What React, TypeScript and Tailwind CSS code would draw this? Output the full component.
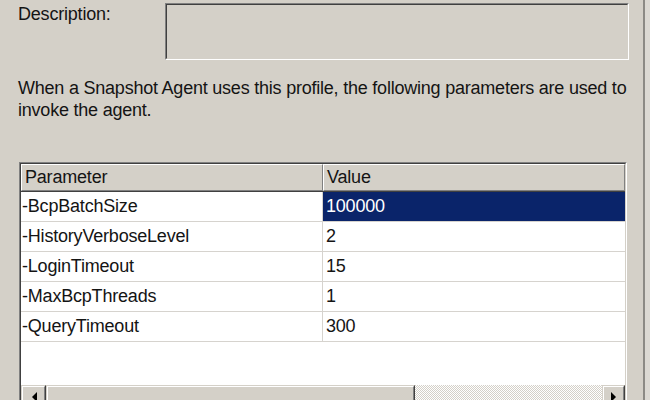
const params: { name: string; value: string }[] = [
  { name: "-BcpBatchSize", value: "100000" },
  { name: "-HistoryVerboseLevel", value: "2" },
  { name: "-LoginTimeout", value: "15" },
  { name: "-MaxBcpThreads", value: "1" },
  { name: "-QueryTimeout", value: "300" },
];

// classic 3D sunken frame: two nested one-pixel borders
function Sunken({ className, children }: { className?: string; children?: React.ReactNode }) {
  return (
    <div
      className={`border border-t-[#808080] border-l-[#808080] border-r-white border-b-white ${className ?? ""}`}
    >
      <div className="h-full border border-t-[#404040] border-l-[#404040] border-r-[#d4d0c8] border-b-[#d4d0c8]">
        {children}
      </div>
    </div>
  );
}

function Raised({ className, children }: { className?: string; children?: React.ReactNode }) {
  return (
    <div
      className={`border border-t-[#d4d0c8] border-l-[#d4d0c8] border-r-[#404040] border-b-[#404040] ${className ?? ""}`}
    >
      <div className="h-full border border-t-white border-l-white border-r-[#808080] border-b-[#808080] bg-[#d4d0c8] flex items-center justify-center">
        {children}
      </div>
    </div>
  );
}

function Arrow({ dir }: { dir: "left" | "right" }) {
  return (
    <svg width="6" height="10" viewBox="0 0 6 10" className="mt-[1px]">
      {dir === "left" ? (
        <polygon points="6,0 6,10 1,5" fill="#000" />
      ) : (
        <polygon points="0,0 0,10 5,5" fill="#000" />
      )}
    </svg>
  );
}

export default function App() {
  return (
    <div
      className="w-[650px] h-[400px] overflow-hidden bg-[#d4d0c8] flex text-[18px] text-[#141414] tracking-[-0.2px]"
      style={{ fontFamily: '"Liberation Sans", Arial, sans-serif' }}
    >
      <div className="w-[643px] shrink-0 flex flex-col">
        <div className="flex pt-[3px]">
          <div className="w-[165px] pl-[18px] pt-[1px] leading-[20px]">Description:</div>
          <Sunken className="w-[464px] h-[57px] bg-[#d4d0c8]" />
        </div>

        <p className="pl-[18px] pr-[6px] mt-[17px] leading-[22px] tracking-[-0.22px] whitespace-nowrap">
          When a Snapshot Agent uses this profile, the following parameters are used to
          <br />
          invoke the agent.
        </p>

        <Sunken className="ml-[19px] mt-[41px] w-[608px] h-[260px] shrink-0 bg-white">
          <div className="h-full flex flex-col bg-white">
            <div className="flex h-[28px] shrink-0 border-b border-[#404040]">
              <div className="w-[302px] flex items-center pl-[3px] bg-[#d4d0c8] border-t border-l border-white border-r border-r-[#808080] border-b border-b-[#808080]">
                Parameter
              </div>
              <div className="w-[302px] flex items-center pl-[3px] bg-[#d4d0c8] border-t border-l border-white border-r border-r-[#808080] border-b border-b-[#808080]">
                Value
              </div>
            </div>

            {params.map((p, i) => (
              <div key={p.name} className="flex h-[30px] shrink-0 border-b border-[#d6d3ce]">
                <div className="w-[302px] flex items-center pl-[1px] border-r border-[#d6d3ce]">
                  {p.name}
                </div>
                <div
                  className={`w-[302px] flex items-center pl-[3px] ${
                    i === 0 ? "bg-[#0a246a] text-white" : ""
                  }`}
                >
                  {p.value}
                </div>
              </div>
            ))}

            <div className="flex-1" />

            {/* horizontal scroll bar */}
            <div className="flex h-[23px] shrink-0 mb-[12px]">
              <Raised className="w-[25px] h-full">
                <Arrow dir="left" />
              </Raised>
              <Raised className="w-[369px] h-full" />
              <div className="flex-1 bg-[repeating-conic-gradient(#ffffff_0%_25%,#d4d0c8_0%_50%)] bg-[length:2px_2px]" />
              <Raised className="w-[23px] h-full">
                <Arrow dir="right" />
              </Raised>
            </div>
          </div>
        </Sunken>
      </div>
      <div className="w-[2px] bg-[#8c8a85]" />
      <div className="flex-1 bg-[#dcd9d3]" />
    </div>
  );
}
